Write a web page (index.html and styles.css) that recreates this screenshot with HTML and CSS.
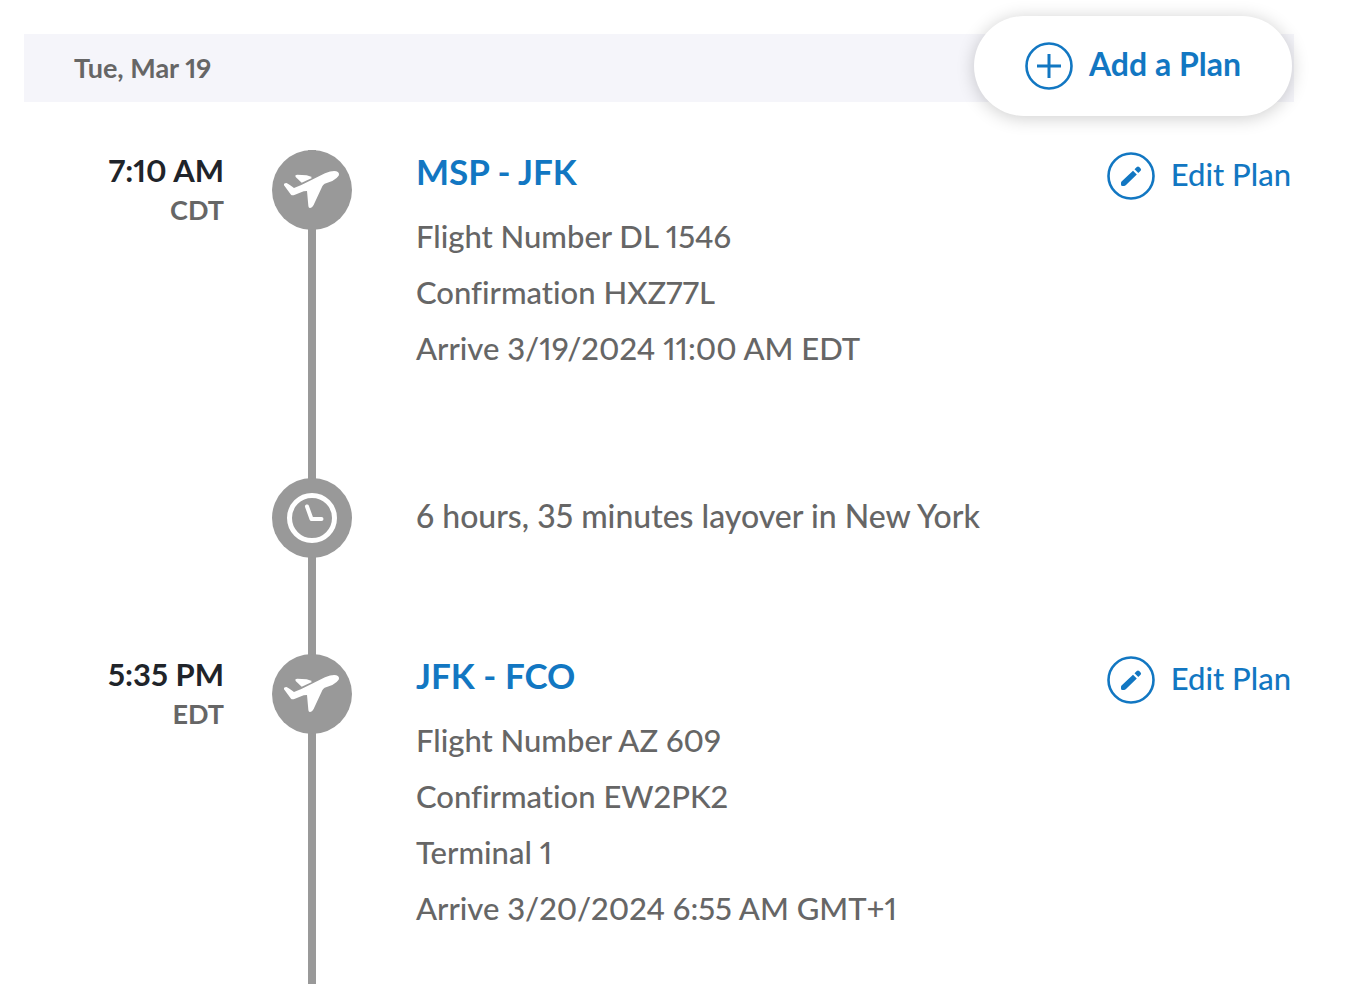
FILE: index.html
```html
<!DOCTYPE html>
<html lang="en">
<head>
<meta charset="utf-8">
<meta name="viewport" content="width=device-width, initial-scale=1">
<title>Trip Itinerary</title>
<link rel="stylesheet" href="styles.css">
</head>
<body>
<svg class="sprite" aria-hidden="true">
  <symbol id="plane" viewBox="0 0 240 240">
    <path d="M36 106Q35 99 43 99Q48 101 66 114L88 105L159 70Q181 61 193 64Q204 68 200 77Q195 85 181 93L158 101Q153 104 151 109L128 158Q122 174 113 174Q109 173 109 167L105 123L95 124L67 135Q60 137 57 134Z"/>
    <path d="M89 98L71 81Q68 74 76 74L104 76Q114 78 120 84Z"/>
  </symbol>
  <symbol id="clock" viewBox="0 0 80 80">
    <circle cx="40" cy="40" r="22.5" stroke-width="5"/>
    <path d="M35 28.500L39.500 41H49.500" stroke-width="4" stroke-linecap="round" stroke-linejoin="round"/>
  </symbol>
  <symbol id="pencil" viewBox="0 0 48 48">
    <circle cx="24" cy="24" r="22.500" fill="none" stroke="currentColor" stroke-width="2.600"/>
    <path fill="currentColor" d="M14 32.500V31Q14 30 14.800 29.200L26 18.800L29.800 22.600L19 33Q18 34 17 34H15.500Q14 34 14 32.500ZM27.500 17.300L29.800 15Q31 14 32.200 15L33.600 16.400Q34.600 17.600 33.600 18.800L31.300 21.100Z"/>
  </symbol>
</svg>
<main class="itinerary">
  <header class="day">
    <h1 class="day-title">Tue, Mar 19</h1>
    <button class="add-plan" type="button">
      <svg class="action-icon" viewBox="0 0 48 48" aria-hidden="true"><g fill="none" stroke="currentColor"><circle cx="24" cy="24" r="22.500" stroke-width="2.600"/><path d="M24 12V36M12 24H36" stroke-width="3"/></g></svg>
      <span class="action-label">Add a Plan</span>
    </button>
  </header>
  <ol class="timeline">
    <li class="stop">
      <div class="when"><time class="hour">7:10 AM</time><span class="zone">CDT</span></div>
      <div class="track"><span class="node"><svg class="glyph" aria-hidden="true"><use href="#plane"/></svg></span></div>
      <div class="plan">
        <h2 class="route">MSP - JFK</h2>
        <p class="detail">Flight Number DL 1546</p>
        <p class="detail">Confirmation HXZ77L</p>
        <p class="detail">Arrive 3/19/2024 11:00 AM EDT</p>
      </div>
      <a class="edit" href="#edit-msp-jfk"><svg class="action-icon" aria-hidden="true"><use href="#pencil"/></svg><span class="action-label">Edit Plan</span></a>
    </li>
    <li class="stop layover">
      <div class="when"></div>
      <div class="track"><span class="node"><svg class="glyph glyph-line" aria-hidden="true"><use href="#clock"/></svg></span></div>
      <p class="wait">6 hours, 35 minutes layover in New York</p>
    </li>
    <li class="stop">
      <div class="when"><time class="hour">5:35 PM</time><span class="zone">EDT</span></div>
      <div class="track"><span class="node"><svg class="glyph" aria-hidden="true"><use href="#plane"/></svg></span></div>
      <div class="plan">
        <h2 class="route">JFK - FCO</h2>
        <p class="detail">Flight Number AZ 609</p>
        <p class="detail">Confirmation EW2PK2</p>
        <p class="detail">Terminal 1</p>
        <p class="detail">Arrive 3/20/2024 6:55 AM GMT+1</p>
      </div>
      <a class="edit" href="#edit-jfk-fco"><svg class="action-icon" aria-hidden="true"><use href="#pencil"/></svg><span class="action-label">Edit Plan</span></a>
    </li>
  </ol>
</main>
</body>
</html>
```
FILE: styles.css
```css
:root {
  --blue: #1277c2;
  --gray: #666;
  --line: #999;
}
* { box-sizing: border-box; }
body {
  margin: 0;
  background: #fff;
  color: var(--gray);
  font-family: Lato, "Open Sans", sans-serif;
  font-size: 31px;
  font-weight: 500;
  font-variant-ligatures: none;
  font-variant-numeric: proportional-nums;
}
h1, h2, p, ol { margin: 0; padding: 0; }
.sprite { position: absolute; width: 0; height: 0; }
.itinerary { padding: 34px 78px 0 24px; }
.day {
  position: relative;
  display: flex;
  align-items: center;
  min-height: 68px;
  padding: 0 50px;
  background: #f5f5fa;
}
.day-title { font-size: 27px; line-height: 40px; font-weight: 700; }
.add-plan {
  position: absolute;
  top: -18px;
  right: 2px;
  display: flex;
  align-items: center;
  gap: 16px;
  height: 100px;
  padding: 0 51px;
  border: 0;
  border-radius: 50px;
  background: #fff;
  box-shadow: 0 2px 18px rgba(0, 0, 0, 0.2);
  color: var(--blue);
  font: inherit;
  font-size: 32px;
  font-weight: 700;
  cursor: pointer;
}
.action-label { line-height: 40px; padding-bottom: 4px; }
.action-icon { flex: none; width: 48px; height: 48px; }
.timeline { list-style: none; padding-top: 48px; }
.stop {
  display: grid;
  grid-template-columns: 200px 176px minmax(0, 1fr) auto;
}
.when {
  display: flex;
  flex-direction: column;
  align-items: flex-end;
}
.hour { color: #20242a; line-height: 40px; font-weight: 700; }
.zone { font-size: 27px; line-height: 40px; font-weight: 700; }
.track {
  display: flex;
  justify-content: center;
  width: 80px;
  margin-left: 48px;
  background: linear-gradient(var(--line), var(--line)) center / 8px 100% no-repeat;
}
.node {
  width: 80px;
  height: 80px;
  border-radius: 50%;
  background: var(--line);
}
.glyph { display: block; width: 80px; height: 80px; fill: #fff; }
.glyph-line { fill: none; stroke: #fff; }
.plan, .wait { padding-left: 16px; }
.plan { padding-bottom: 102px; }
.stop:last-child .plan { padding-bottom: 48px; }
.route { margin-bottom: 16px; color: var(--blue); font-size: 35px; line-height: 42px; font-weight: 700; }
.detail { line-height: 56px; }
.edit {
  display: flex;
  align-items: center;
  align-self: start;
  gap: 16px;
  padding: 2px 3px 0 0;
  color: var(--blue);
  text-decoration: none;
}
.layover { min-height: 176px; }
.wait { font-size: 32px; line-height: 76px; }
```
